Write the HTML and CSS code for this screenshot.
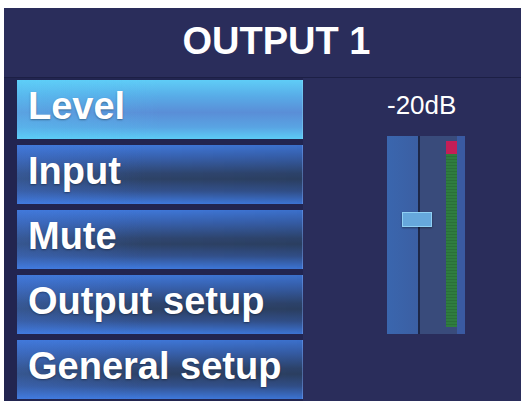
FILE: index.html
```html
<html>
    <head>
        <link rel="stylesheet" href="styles.css">
        <meta name="viewport" content="width=device-width, initial-scale=1.0">
        <title>OUTPUT 1</title>
    </head>
    <body>
        <div class="panel">
            <div class="header"><h1 class="title">OUTPUT 1</h1></div>
            <div class="content">
                <ul class="menu">
                    <li class="item selected">Level</li>
                    <li class="item">Input</li>
                    <li class="item">Mute</li>
                    <li class="item">Output setup</li>
                    <li class="item">General setup</li>
                </ul>
                <div class="level">
                    <div class="db">-20dB</div>
                    <div class="fader">
                        <div class="track"></div>
                        <div class="groove"></div>
                        <div class="gap"></div>
                        <div class="meter"><div class="peak"></div><div class="bar"></div></div>
                        <div class="edge"></div>
                        <div class="knob"></div>
                    </div>
                </div>
            </div>
        </div>
    </body>
</html>
```

FILE: styles.css
```css
html {padding: 0;}
body {margin: 0; padding: 0; background: #fff; font-family: "Liberation Sans", Arial, sans-serif; color: #fff;}

.panel {
    margin: 8px 5px 0 4px;
    width: 517px;
    height: 393px;
    background: #2a2d5b;
    display: flex;
    flex-direction: column;
}

.header {
    height: 70px;
    border-bottom: 1px solid #1c1f45;
    display: flex;
    align-items: center;
    justify-content: center;
    padding-left: 28px;
    padding-bottom: 4px;
    box-sizing: border-box;
}
.title {margin: 0; font-size: 38px; font-weight: bold; line-height: 40px;}

.content {display: flex; flex: 1;}

.menu {
    list-style: none;
    margin: 0;
    padding: 2px 0 0 13px;
    display: flex;
    flex-direction: column;
    gap: 6px;
    background: #222550;
}

.item {
    width: 286px;
    height: 59px;
    box-sizing: border-box;
    padding: 0 0 6px 11px;
    font-size: 38px;
    font-weight: bold;
    line-height: 53px;
    text-shadow: 0 1px 2px rgba(0, 0, 0, 0.35);
    border-right: 1px solid rgba(255, 255, 255, 0.12);
    background:
        linear-gradient(to right, rgba(70, 125, 225, 0.35), rgba(0, 0, 0, 0) 45%, rgba(0, 0, 0, 0.06)),
        linear-gradient(#3f77d8 0%, #3760ac 22%, #2f4670 48%, #2d4266 58%, #33528e 78%, #3f7adf 100%);
}

.item.selected {
    background:
        linear-gradient(to right, rgba(90, 210, 250, 0.3), rgba(0, 0, 0, 0) 50%),
        linear-gradient(#5fcdf7 0%, #58abe7 28%, #5a8ed7 55%, #59a4e3 80%, #5ccbf5 100%);
}

.level {
    flex: 1;
    padding: 14px 0 0 84px;
    display: flex;
    flex-direction: column;
}

.db {
    width: 78px;
    box-sizing: border-box;
    padding-right: 12px;
    text-align: center;
    font-size: 26px;
    line-height: 26px;
    white-space: nowrap;
}

.fader {
    position: relative;
    margin-top: 18px;
    width: 78px;
    height: 198px;
    display: flex;
}
.track {width: 31px; background: linear-gradient(to right, #3a66ae, #3b5fa3);}
.groove {width: 2px; background: #1d2747;}
.gap {width: 26px; background: #394b7b;}
.meter {
    width: 11px;
    background: #394b7b;
    padding: 5px 0 7px;
    display: flex;
    flex-direction: column;
}
.peak {height: 13px; background: #c41e57;}
.bar {
    flex: 1;
    background: #2f7d3f;
    background-image: repeating-linear-gradient(#2f7d3f 0 2px, #2a7038 2px 3px);
}
.edge {width: 8px; background: #3a5aa2;}

.knob {
    position: absolute;
    left: 15px;
    top: 76px;
    width: 30px;
    height: 15px;
    box-sizing: border-box;
    background: #66a8dc;
    border: 1px solid #8fd0f4;
    box-shadow: 0 1px 2px rgba(0, 0, 0, 0.4);
}
```
